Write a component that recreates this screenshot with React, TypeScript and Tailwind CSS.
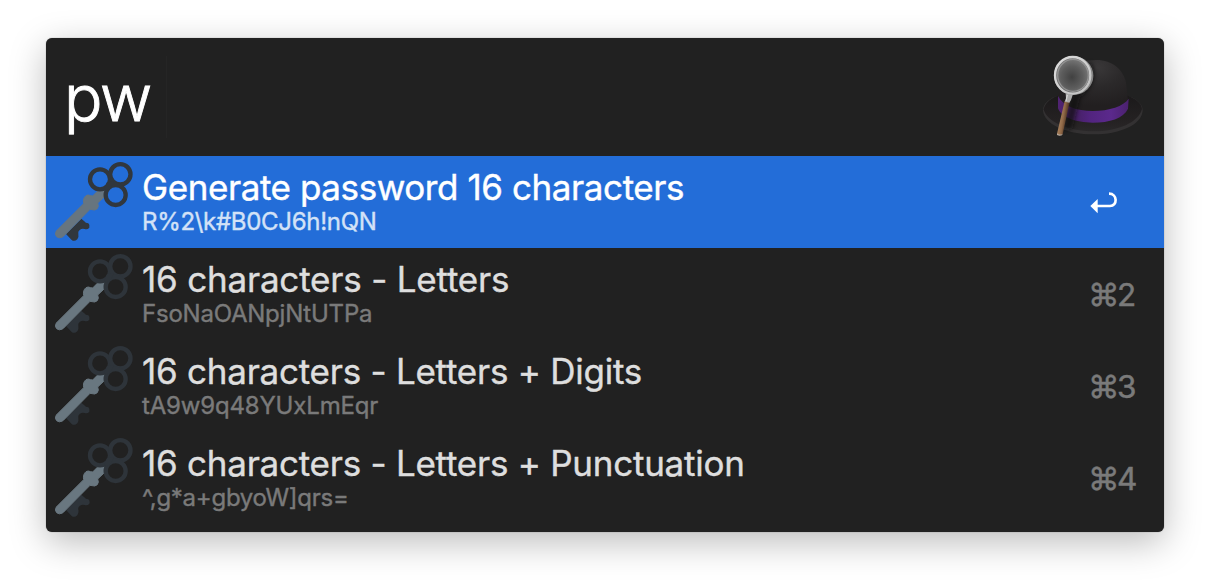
type Result = { title: string; subtitle: string; shortcut?: string; titleSpacing: string; subtitleSpacing: string };

const results: Result[] = [
  { title: 'Generate password 16 characters', subtitle: 'R%2\\k#B0CJ6h!nQN', titleSpacing: 'tracking-[-0.42px]', subtitleSpacing: 'tracking-[-0.3px]' },
  { title: '16 characters - Letters', subtitle: 'FsoNaOANpjNtUTPa', shortcut: '2', titleSpacing: 'tracking-[-0.2px]', subtitleSpacing: 'tracking-[-0.23px]' },
  { title: '16 characters - Letters + Digits', subtitle: 'tA9w9q48YUxLmEqr', shortcut: '3', titleSpacing: 'tracking-[-0.25px]', subtitleSpacing: 'tracking-[-0.17px]' },
  { title: '16 characters - Letters + Punctuation', subtitle: '^,g*a+gbyoW]qrs=', shortcut: '4', titleSpacing: 'tracking-[-0.25px]', subtitleSpacing: 'tracking-[-0.27px]' },
];

function KeyIcon({ active }: { active: boolean }) {
  const dark = active ? '#31373d' : '#2e343a';
  const shaft = active ? '#67757f' : '#697780';
  return (
    <svg viewBox="0 0 288 276" className="h-[92px] w-24 shrink-0" fill="none">
      <path d="M60 234 L106 188 L114 195 Q119 202 127 202 Q133 208 130 215 Q124 222 116 219 Q108 216 101 222 Q95 227 97 233 Q99 241 94 250 Q85 258 77 252 Z" fill={dark} />
      <path d="M31 225 L113 143 Q110 127 120 119 Q126 115 134 119 L140 120 L157 103 L175 100 L174 123 L155 141 L157 150 Q156 160 146 162 L132 160 L51 242 Q40 249 32 242 Q25 235 31 225 Z" fill={shaft} stroke={shaft} strokeWidth="3" />
      <g stroke={dark} strokeWidth="13">
        <circle cx="162" cy="70" r="30" />
        <circle cx="223" cy="55" r="30.5" />
        <circle cx="209" cy="117" r="30" />
      </g>
      <path d="M183 78 L204 76 L193 98 L181 104 L175 96 Z" fill={dark} />
    </svg>
  );
}

function HatIcon() {
  return (
    <svg viewBox="0 0 390 330" className="h-[110px] w-[130px] shrink-0" fill="none">
      <defs>
        <radialGradient id="crown" cx="0.55" cy="0.15" r="0.75">
          <stop offset="0" stopColor="#3a3839" />
          <stop offset="0.5" stopColor="#2b292a" />
          <stop offset="1" stopColor="#221f20" />
        </radialGradient>
        <linearGradient id="brim" x1="0" y1="0" x2="0" y2="1">
          <stop offset="0" stopColor="#1b191a" />
          <stop offset="0.75" stopColor="#252223" />
          <stop offset="1" stopColor="#2a2829" />
        </linearGradient>
        <linearGradient id="band">
          <stop offset="0" stopColor="#512373" />
          <stop offset="0.2" stopColor="#43205f" />
          <stop offset="0.45" stopColor="#52247f" />
          <stop offset="0.75" stopColor="#5b298c" />
          <stop offset="1" stopColor="#4b216e" />
        </linearGradient>
        <radialGradient id="lens" cx="0.48" cy="0.55" r="0.6">
          <stop offset="0" stopColor="#414141" />
          <stop offset="0.5" stopColor="#5c5c5c" />
          <stop offset="1" stopColor="#858585" />
        </radialGradient>
        <linearGradient id="rim" x1="0" y1="0" x2="1" y2="1">
          <stop offset="0" stopColor="#dedede" />
          <stop offset="0.5" stopColor="#cfcfcf" />
          <stop offset="1" stopColor="#c0c0c0" />
        </linearGradient>
        <linearGradient id="handle" x1="90" y1="230" x2="110" y2="233" gradientUnits="userSpaceOnUse">
          <stop offset="0" stopColor="#a57e5a" />
          <stop offset="0.5" stopColor="#8f6847" />
          <stop offset="1" stopColor="#553a26" />
        </linearGradient>
        <filter id="soft" x="-40%" y="-40%" width="180%" height="180%">
          <feGaussianBlur stdDeviation="6" />
        </filter>
      </defs>
      <path d="M39 212 C38 191 60 171 94 165 L288 166 C318 174 338 192 338 212 C335 254 270 283 190 283 C105 283 43 251 39 212 Z" fill="#333132" />
      <path d="M41 208 C44 188 65 171 94 164 L288 165 C315 174 335 190 336 207 C326 247 265 274 190 274 C112 274 49 244 41 208 Z" fill="url(#brim)" />
      <path d="M84 175 C91 100 120 60 200 60 C247 60 280 89 288 128 L294 182 C280 225 100 225 84 175 Z" fill="url(#crown)" />
      <path d="M84 168 C99 198 139 213 188 213 C238 213 281 198 296 176 L294 206 C280 235 239 248 188 248 C137 248 94 232 84 205 Z" fill="url(#band)" />
      <path d="M178 65 C207 93 190 142 149 174 L127 266 L98 272 L122 174 Z" fill="#101010" opacity="0.65" filter="url(#soft)" />
      <path d="M104 183 L119 186 L98 282 Q88 290 81 281 Z" fill="url(#handle)" />
      <path d="M81 280 Q89 287 98 281 L96 286 Q88 289 81 285 Z" fill="#b7a99b" />
      <path d="M107 160 L129 162 L123 180 L118 188 L104 185 L108 176 Z" fill="#aaa" />
      <path d="M110 164 L114 165 L110 183 L106 182 Z" fill="#eee" opacity="0.6" />
      <ellipse cx="131" cy="107" rx="59" ry="58" fill="#858585" />
      <ellipse cx="128" cy="106" rx="53" ry="55" fill="url(#lens)" stroke="url(#rim)" strokeWidth="7" />
      <ellipse cx="129" cy="106" rx="46" ry="48" stroke="#929292" strokeWidth="4" />
    </svg>
  );
}

function ReturnIcon() {
  return (
    <svg viewBox="0 0 84 72" className="h-6 w-7 shrink-0" fill="none">
      <path d="M1 45 L23 24 V67 Z" fill="#fff" />
      <path d="M20 45 H60 C83 45 83 8 57 8" stroke="#fff" strokeWidth="8" />
    </svg>
  );
}

export default function App() {
  return (
    <main className="h-[586px] w-[1210px] overflow-hidden bg-white px-[46px] pt-[38px] font-['Inter',sans-serif]">
      <section className="h-[494px] overflow-hidden rounded-[6px] bg-[#212121] shadow-[0_0_1px_rgba(0,0,0,0.55),0_10px_36px_rgba(0,0,0,0.27)]">
        <header className="flex h-[118px] items-start justify-between pl-[18px] pr-1">
          <div className="flex">
            <span className="w-[102px] pt-[22px] text-[64px] font-light leading-[76px] tracking-[-1.5px] text-white [-webkit-text-stroke:0.9px_currentColor]">pw</span>
            <span className="mt-[18px] h-[82px] w-px bg-[#252525]" />
          </div>
          <div className="pt-[2px]"><HatIcon /></div>
        </header>
        <ul>
          {results.map((item, index) => (
            <li key={item.title} className={index === 0 ? 'flex h-[92px] bg-[#236dd8] text-white' : 'flex h-[92px] text-[#dedede]'}>
              <KeyIcon active={index === 0} />
              <div className="flex grow flex-col whitespace-nowrap pt-[10px] font-normal [-webkit-text-stroke:0.4px_currentColor]">
                <span className={`h-[42px] text-[35px] leading-[42px] ${item.titleSpacing}`}>{item.title}</span>
                <span className={`h-7 text-[24px] leading-7 ${item.subtitleSpacing} ${index === 0 ? 'text-[#d3e2f7]' : 'text-[#7a7a7a]'}`}>{item.subtitle}</span>
              </div>
              {item.shortcut ? (
                <span className="flex w-[76px] pt-[27px] text-[31.5px] leading-10 tracking-[-2.5px] text-[#7a7a7a] [-webkit-text-stroke:0.5px_currentColor]">⌘{item.shortcut}</span>
              ) : (
                <span className="w-[74px] pt-[35px]"><ReturnIcon /></span>
              )}
            </li>
          ))}
        </ul>
      </section>
    </main>
  );
}
